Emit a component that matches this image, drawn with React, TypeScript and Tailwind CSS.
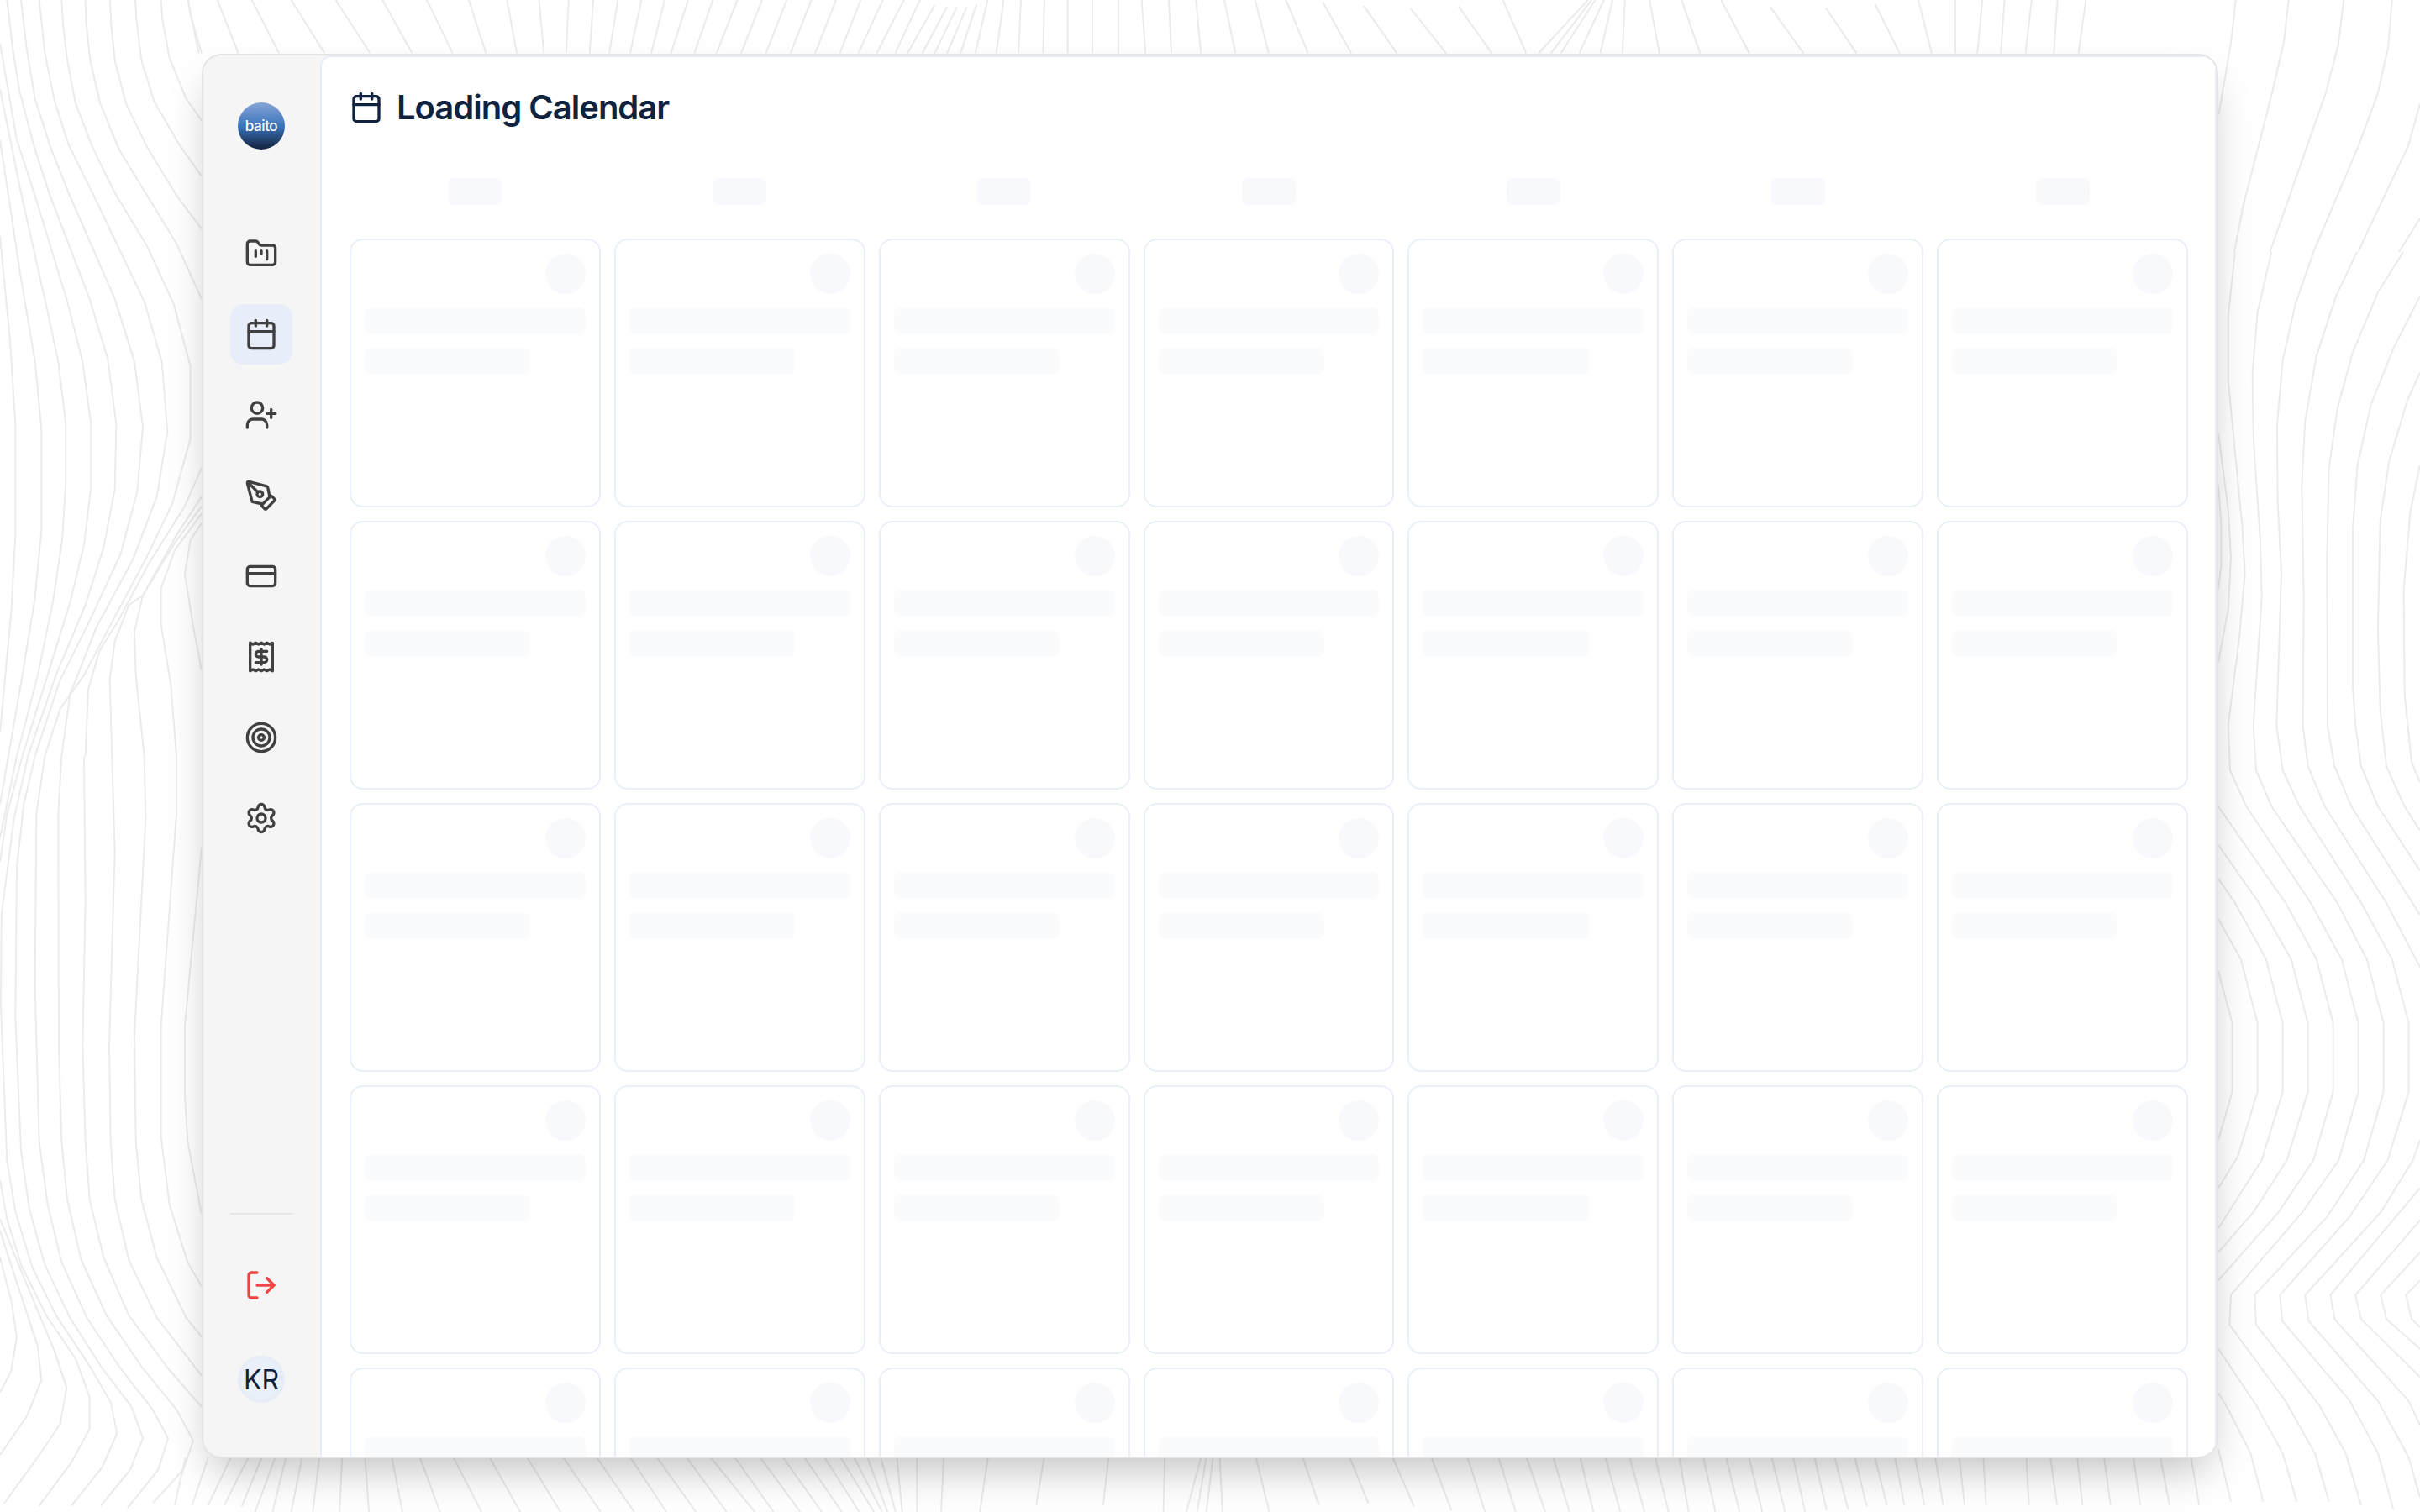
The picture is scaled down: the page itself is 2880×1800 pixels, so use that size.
import React from "react"
import {
  Calendar,
  CreditCard,
  FolderKanban,
  LogOut,
  PenTool,
  Receipt,
  Settings,
  Target,
  UserPlus,
} from "lucide-react"

// contour lines traced per region, each group in the coordinates of its own crop
const leftTop = [
  "672,0 680,30 720,110",
  "575,0 580,40 605,120 665,205 720,250",
  "483,0 487,40 505,125 550,210 640,300 720,365",
  "393,0 397,50 410,125 450,215 525,305 630,405 720,475",
  "305,0 308,50 322,125 358,215 425,310 525,405 630,505 720,620",
  "220,0 225,50 240,125 270,215 330,305 410,400 525,510 620,630 680,760 680,910 615,1045 520,1160 400,1290 300,1400 215,1470 160,1568",
  "140,0 160,110 195,210 245,300 330,400 515,625 578,750 598,895 560,1030 475,1160 345,1300 250,1440 220,1568",
  "75,0 95,100 125,205 180,305 245,400 410,620 480,750 510,885 490,1020 430,1150 310,1300 215,1410 125,1568",
  "25,0 45,100 70,190 120,300 175,400 320,620 385,745 415,880 410,1015 370,1135 305,1255 200,1400 100,1568",
  "0,90 60,290 130,415 240,625 295,750 325,880 325,1010 300,1130 250,1250 170,1400 80,1568",
  "0,185 75,400 160,620 208,750 235,880 235,1000 222,1120 190,1245 135,1400 60,1568",
  "0,290 70,560 125,750 148,890 148,1100 125,1240 80,1400 30,1568",
  "0,490 35,700 55,880 55,1110 40,1270 0,1520",
  "720,970 660,1050 530,1170 420,1290 355,1350 315,1430 305,1568",
  "720,1030 630,1110 510,1235 460,1255 410,1330 392,1410 400,1568",
  "720,1050 625,1125 510,1235 480,1310 485,1400 515,1568",
  "720,1065 625,1140 575,1220 575,1295 610,1420 630,1568",
  "720,1085 680,1120 660,1190 690,1300 720,1390",
]

const leftBottom = [
  "630,0 630,120 575,560 575,790 605,930 670,1050 720,1100",
  "515,0 520,130 480,580 485,800 505,920 560,1040 665,1165 720,1205",
  "400,0 410,200 390,600 395,800 410,920 460,1045 560,1165 720,1285",
  "300,0 305,300 295,600 305,800 320,920 370,1040 460,1160 600,1270 720,1350",
  "220,0 208,120 210,600 220,800 240,920 290,1045 380,1160 510,1270 630,1355 690,1420 655,1480 545,1550",
  "160,0 130,120 125,480 140,800 170,930 220,1050 310,1165 430,1270 545,1355 600,1415 565,1480 455,1560",
  "125,0 85,100 60,230 55,540 75,820 105,940 160,1055 250,1165 365,1270 470,1350 510,1415 465,1480 360,1555",
  "100,0 50,130 5,330 3,520 25,840 55,945 115,1060 200,1160 320,1265 395,1340 418,1405 365,1475 255,1555",
  "80,0 25,120 0,220",
  "0,880 25,960 75,1055 165,1160 270,1250 320,1330 320,1395 255,1465 140,1555",
  "60,0 0,170",
  "0,960 70,1060 195,1235 238,1310 215,1385 140,1450 15,1550",
  "30,0 0,100",
  "0,985 135,1225 148,1295 95,1370 0,1450",
  "0,1040 40,1130 60,1205 40,1275 0,1320",
  "720,190 660,560 660,700 670,800 720,950",
]

const rightTop = [
  "975,0 960,150 920,410",
  "1145,0 1130,150 1090,340 1000,730 970,900",
  "1322,0 1305,160 1265,330 1085,900",
  "1478,0 1465,170 1430,340 1370,520 1225,900",
  "1568,370 1530,520 1385,860 1370,900",
  "1568,780 1500,900",
]

const rightBottom = [
  "60,0 35,80 35,160 85,340 95,400 75,480 35,590 42,645 100,690 330,810 440,880 500,960 500,1045 430,1130 300,1195 45,1298 40,1335 240,1430 345,1495 395,1555",
  "190,0 140,75 122,150 125,230 150,360 155,430 125,590 135,645 190,690 425,810 530,880 590,960 590,1045 520,1130 390,1200 130,1298 135,1335 360,1435 455,1495 510,1560",
  "340,0 275,65 230,135 210,215 212,310 225,400 208,590 230,645 290,690 510,810 620,880 680,960 680,1045 605,1130 470,1200 220,1298 228,1330 470,1430 570,1495 625,1565",
  "495,0 420,55 350,130 310,210 298,290 305,430 302,590 320,640 380,690 600,810 720,890",
  "660,0 570,50 480,125 425,195 395,270 388,380 390,590 415,640 475,690 720,825",
  "720,55 625,120 545,190 497,265 480,345 480,540 490,590 510,640 570,690 720,770",
  "720,150 675,185 610,260 578,335 570,470 578,570 600,640 665,690 720,720",
  "720,265 685,325 662,420 665,550 690,635 720,660",
  "0,225 35,320 45,380 35,445 0,510",
  "0,290 10,340 10,390 0,420",
  "0,895 50,960 50,1045 0,1105",
  "0,830 80,880 140,960 140,1045 70,1125 0,1165",
  "0,780 60,810 170,880 230,960 230,1045 155,1130 0,1215",
  "0,738 145,810 260,880 320,960 320,1045 245,1130 125,1195 0,1245",
  "0,690 240,810 350,880 410,960 410,1045 340,1130 215,1195 0,1280",
  "720,1105 695,1130 580,1195 310,1298 322,1330 570,1430 680,1500 720,1550",
  "720,1165 575,1225 400,1298 415,1328 680,1430 720,1460",
  "720,1205 490,1298 510,1328 720,1400",
  "720,1245 580,1298 600,1328 720,1365",
  "720,1280 670,1298 690,1328 720,1338",
  "0,1490 45,1555",
  "0,1420 35,1440 115,1495 160,1555",
  "0,1365 135,1435 230,1495 280,1555",
]

// [x at top, x at bottom, y where the line starts]
const topStrip = [
  [16, 25, 0], [40, 57, 0], [68, 90, 0], [100, 127, 0], [136, 164, 0], [174, 198, 0], [210, 231, 0], [244, 258, 0],
  [275, 283, 0], [301, 305, 0], [325, 323, 0], [345, 342, 0], [365, 358, 0], [384, 375, 0], [403, 392, 0], [422, 408, 0],
  [442, 427, 0], [462, 445, 0], [482, 465, 0], [502, 485, 0], [522, 505, 0], [542, 525, 0], [562, 545, 0], [580, 560, 0],
  [597, 575, 0], [610, 590, 0], [622, 600, 18], [632, 612, 25], [640, 622, 25], [648, 632, 25], [656, 643, 15], [665, 655, 0],
  [678, 672, 0], [692, 690, 0], [711, 710, 0], [730, 730, 0], [750, 750, 0], [771, 771, 0], [790, 793, 0], [812, 814, 0],
  [834, 838, 0], [857, 866, 0], [882, 893, 0], [907, 925, 0], [937, 960, 8], [970, 997, 20], [1008, 1037, 30], [1047, 1074, 22],
  [1083, 1102, 0], [1152, 1112, 0], [1155, 1122, 0], [1158, 1130, 0], [1165, 1145, 0], [1172, 1162, 0], [1182, 1180, 0],
  [1202, 1210, 0], [1228, 1243, 0], [1260, 1283, 0], [1300, 1327, 25], [1345, 1370, 28], [1385, 1405, 15], [1420, 1431, 0],
  [1450, 1450, 0], [1472, 1468, 0], [1490, 1487, 0], [1512, 1507, 0], [1533, 1530, 0], [1556, 1550, 0],
]

// [x at top, x at bottom, y where the line ends]
const bottomStrip = [
  [13, 5, 185], [30, 18, 185], [47, 30, 185], [60, 42, 185], [70, 55, 190], [80, 65, 210], [88, 78, 210], [100, 92, 210],
  [113, 108, 210], [130, 128, 210], [147, 150, 210], [167, 175, 210], [188, 203, 210], [213, 234, 210], [240, 263, 210],
  [268, 293, 210], [295, 323, 210], [320, 348, 210], [345, 372, 210], [365, 394, 210], [387, 417, 210], [405, 438, 210],
  [423, 452, 210], [442, 472, 210], [459, 488, 210], [475, 503, 210], [490, 516, 210], [502, 527, 210], [512, 533, 210],
  [522, 537, 210], [532, 543, 210], [544, 548, 210], [559, 559, 210], [579, 577, 210], [612, 606, 210], [654, 648, 185],
  [702, 698, 185], [744, 743, 210], [771, 760, 210], [775, 768, 210], [780, 775, 210], [785, 787, 210], [812, 822, 210],
  [847, 859, 185], [882, 896, 180], [914, 930, 190], [943, 958, 205], [970, 983, 210], [993, 1006, 210], [1014, 1028, 210],
  [1034, 1046, 210], [1054, 1064, 210], [1073, 1084, 210], [1091, 1102, 210], [1110, 1120, 210], [1128, 1135, 210],
  [1146, 1155, 210], [1163, 1173, 210], [1180, 1190, 210], [1197, 1207, 210], [1213, 1222, 210], [1229, 1238, 205],
  [1244, 1254, 200], [1259, 1268, 190], [1274, 1283, 185], [1289, 1296, 185], [1304, 1311, 185], [1319, 1325, 185],
  [1337, 1341, 185], [1355, 1357, 185], [1387, 1389, 185], [1405, 1410, 185], [1425, 1429, 185], [1445, 1450, 185],
  [1467, 1472, 185], [1487, 1494, 185], [1510, 1516, 185],
]

const Group = ({ transform, lines }: { transform: string; lines: string[] }) => (
  <g transform={transform}>
    {lines.map((points) => (
      <polyline key={points} points={points} vectorEffect="non-scaling-stroke" />
    ))}
  </g>
)

const Contours = () => (
  <svg
    className="absolute inset-0 h-[1800px] w-[2880px]"
    viewBox="0 0 2880 1800"
    fill="none"
    stroke="#ebebeb"
    strokeWidth={2}
    strokeLinejoin="round"
  >
    <Group transform="scale(0.3333 0.574)" lines={leftTop} />
    <Group transform="translate(0 900) scale(0.3333 0.574)" lines={leftBottom} />
    <Group transform="translate(2300 0) scale(0.37 0.3333)" lines={rightTop} />
    <Group transform="translate(2640 300) scale(0.3333 0.9566)" lines={rightBottom} />
    <Group
      transform="translate(200 0) scale(1.4668 0.3333)"
      lines={topStrip.map(([a, b, y]) => `${a},${y} ${b},190`)}
    />
    <Group
      transform="translate(200 1730) scale(1.5944 0.3333)"
      lines={bottomStrip.map(([a, b, y]) => `${a},15 ${b},${y}`)}
    />
  </svg>
)

const navItems = [
  { icon: FolderKanban },
  { icon: Calendar, active: true },
  { icon: UserPlus },
  { icon: PenTool },
  { icon: CreditCard },
  { icon: Receipt },
  { icon: Target },
  { icon: Settings },
]

const Sidebar = () => (
  <aside className="flex w-[139px] shrink-0 flex-col items-stretch bg-[#f5f5f5] pb-[64px] pl-8 pr-[33px] pt-[56px]">
    <div className="mx-auto flex h-14 w-14 items-center justify-center rounded-full bg-gradient-to-b from-[#86a5d6] via-[#3b74bd] to-[#14243f]">
      <span className="text-[17px] font-medium leading-none tracking-tight text-white">baito</span>
    </div>
    <nav className="mt-[88px] flex flex-col gap-6">
      {navItems.map(({ icon: Icon, active }, i) => (
        <div
          key={i}
          className={`flex h-[72px] items-center justify-center rounded-2xl ${active ? "bg-[#e7eef9]" : ""}`}
        >
          <Icon className="h-10 w-10 text-[#404040]" strokeWidth={2} />
        </div>
      ))}
    </nav>
    <div className="mt-auto flex flex-col gap-12">
      <div className="h-[2px] bg-[#e5e5e5]" />
      <div className="flex h-[72px] items-center justify-center">
        <LogOut className="h-10 w-10 text-[#ef4444]" strokeWidth={2} />
      </div>
      <div className="mx-auto flex h-14 w-14 items-center justify-center rounded-full border-4 border-[#e6edf7] bg-[#e9f0f9] pt-0.5 text-[32px] leading-none text-[#0f2340]">
        KR
      </div>
    </div>
  </aside>
)

const DayCard = () => (
  <div className="flex h-80 flex-col gap-4 rounded-2xl border-2 border-[#e9effa] bg-white p-4">
    <div className="h-12 w-12 self-end rounded-full bg-[#f8f9fd]" />
    <div className="h-8 rounded-lg bg-[#fafbfd]" />
    <div className="h-8 w-3/4 rounded-lg bg-[#fafbfd]" />
  </div>
)

export default function App() {
  return (
    <div className="relative h-[1800px] overflow-hidden bg-white px-[240px] py-16 font-['Inter',sans-serif]">
      <Contours />
      <div className="relative flex h-full overflow-hidden rounded-3xl border-2 border-[#e5e5e5] bg-[#f5f5f5] shadow-2xl">
        <Sidebar />
        <main className="min-w-0 flex-1 overflow-hidden rounded-tl-xl border-2 border-[#e6edf7] border-b-0 bg-white pl-[33px] pr-8 pt-8">
          <div className="mb-14 flex h-14 items-center gap-4">
            <Calendar className="h-10 w-10 text-[#0f2340]" strokeWidth={2} />
            <h1 className="text-[40px] font-semibold leading-[56px] tracking-tight text-[#0f2340]">Loading Calendar</h1>
          </div>
          <div className="mb-10 grid grid-cols-7 gap-4">
            {Array.from({ length: 7 }).map((_, i) => (
              <div key={i} className="mx-auto h-8 w-16 rounded-lg bg-[#f8f9fd]" />
            ))}
          </div>
          <div className="grid grid-cols-7 gap-4">
            {Array.from({ length: 35 }).map((_, i) => (
              <DayCard key={i} />
            ))}
          </div>
        </main>
      </div>
    </div>
  )
}
